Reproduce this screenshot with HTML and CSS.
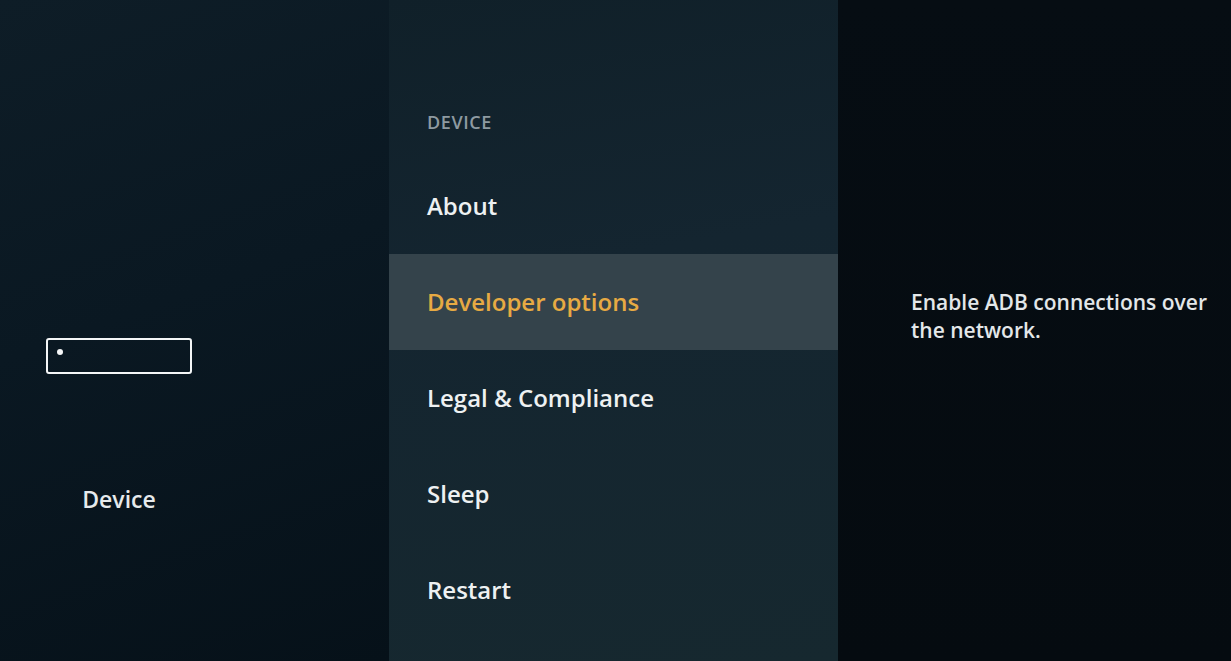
FILE: index.html
```html
<!DOCTYPE html>
<html>
<head>
<meta charset="utf-8">
<link rel="stylesheet" href="styles.css">
</head>
<body>
<div class="screen">
  <aside class="side">
    <div class="device-block">
      <div class="device-icon"><span class="led"></span></div>
      <div class="device-label">Device</div>
    </div>
  </aside>
  <main class="menu">
    <div class="menu-title">DEVICE</div>
    <div class="item">About</div>
    <div class="item active">Developer options</div>
    <div class="item">Legal &amp; Compliance</div>
    <div class="item">Sleep</div>
    <div class="item">Restart</div>
  </main>
  <section class="detail">
    <p class="desc">Enable ADB connections over the network.</p>
  </section>
</div>
</body>
</html>
```
FILE: styles.css
```css
html, body {
  margin: 0;
  padding: 0;
  background: #07111a;
}
.screen {
  width: 1231px;
  height: 661px;
  display: flex;
  overflow: hidden;
  font-family: "Open Sans", "Noto Sans", sans-serif;
  color: #e9ecee;
}
.side {
  width: 389px;
  background: linear-gradient(160deg, #0e1d27 0%, #0a1822 45%, #061119 100%);
}
.device-block {
  margin-top: 338px;
  margin-left: 46px;
  width: 146px;
}
.device-icon {
  box-sizing: border-box;
  width: 146px;
  height: 36px;
  border: 2px solid #f4f6f7;
  border-radius: 3px;
  position: relative;
}
.led {
  position: absolute;
  left: 9px;
  top: 9px;
  width: 6px;
  height: 6px;
  border-radius: 50%;
  background: #f4f6f7;
}
.device-label {
  margin-top: 110px;
  text-align: center;
  font-size: 23px;
  font-weight: 600;
  line-height: 30px;
  color: #e6eaec;
}
.menu {
  width: 449px;
  padding-top: 107px;
  box-sizing: border-box;
  background: linear-gradient(170deg, #102029 0%, #142530 40%, #16282f 100%);
}
.menu-title {
  padding-left: 38px;
  font-size: 18px;
  letter-spacing: 0.6px;
  line-height: 30px;
  height: 51px;
  color: #8e9aa1;
  font-weight: 600;
}
.item {
  height: 96px;
  display: flex;
  align-items: center;
  padding-left: 38px;
  padding-bottom: 2px;
  box-sizing: border-box;
  font-size: 24px;
  font-weight: 600;
  color: #eef1f2;
}
.item.active {
  background: #34434b;
  color: #e7aa43;
}
.detail {
  flex: 1;
  background: linear-gradient(180deg, #060d13 0%, #050b10 100%);
  padding-left: 73px;
  padding-top: 288px;
  box-sizing: border-box;
}
.desc {
  margin: 0;
  font-size: 21px;
  line-height: 28px;
  font-weight: 600;
  color: #e3e7e9;
  width: 318px;
}
```
